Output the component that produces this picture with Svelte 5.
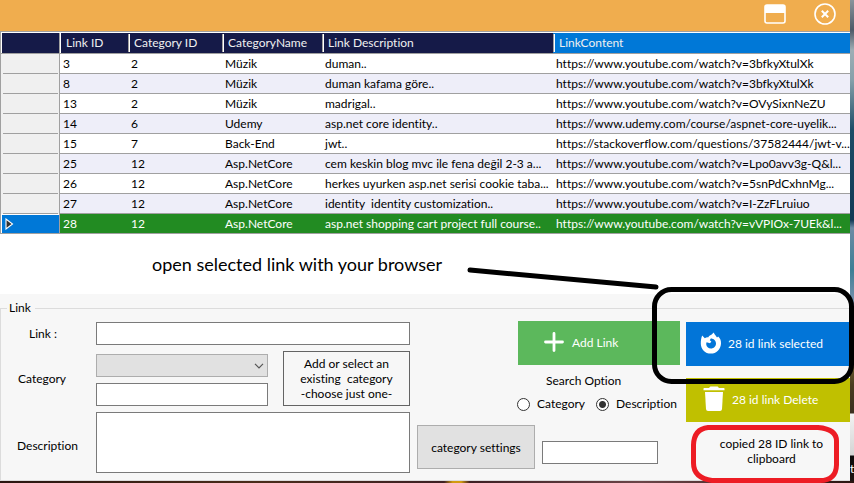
<script>
  const rows = [
    { id: 3, cat: 2, name: 'Müzik', desc: 'duman..', url: 'https://www.youtube.com/watch?v=3bfkyXtulXk' },
    { id: 8, cat: 2, name: 'Müzik', desc: 'duman kafama göre..', url: 'https://www.youtube.com/watch?v=3bfkyXtulXk' },
    { id: 13, cat: 2, name: 'Müzik', desc: 'madrigal..', url: 'https://www.youtube.com/watch?v=OVySixnNeZU' },
    { id: 14, cat: 6, name: 'Udemy', desc: 'asp.net core identity..', url: 'https://www.udemy.com/course/aspnet-core-uyelik...' },
    { id: 15, cat: 7, name: 'Back-End', desc: 'jwt..', url: 'https://stackoverflow.com/questions/37582444/jwt-v...' },
    { id: 25, cat: 12, name: 'Asp.NetCore', desc: 'cem keskin blog mvc ile fena değil 2-3 a...', url: 'https://www.youtube.com/watch?v=Lpo0avv3g-Q&l...' },
    { id: 26, cat: 12, name: 'Asp.NetCore', desc: 'herkes uyurken asp.net serisi cookie taba...', url: 'https://www.youtube.com/watch?v=5snPdCxhnMg...' },
    { id: 27, cat: 12, name: 'Asp.NetCore', desc: 'identity  identity customization..', url: 'https://www.youtube.com/watch?v=I-ZzFLruiuo' },
    { id: 28, cat: 12, name: 'Asp.NetCore', desc: 'asp.net shopping cart project full course..', url: 'https://www.youtube.com/watch?v=vVPIOx-7UEk&l...' }
  ];
  let selected = $state(28);
  let searchBy = $state('description');
</script>

<div class="desktop">
  <main class="window">
    <header class="titlebar">
      <button class="tool" aria-label="Maximize">
        <svg width="22" height="20" viewBox="0 0 22 20">
          <rect x="1" y="1" width="20" height="18" rx="2" fill="none" stroke="#fff" stroke-width="1.6" />
          <path d="M1 2.5Q1 1 2.5 1H19.5Q21 1 21 2.5V9H1Z" fill="#fff" />
        </svg>
      </button>
      <button class="tool" aria-label="Close">
        <svg width="22" height="22" viewBox="0 0 22 22" fill="none" stroke="#fff">
          <circle cx="11" cy="11" r="10" stroke-width="1.6" />
          <path d="M7.8 7.8L14.2 14.2M14.2 7.8L7.8 14.2" stroke-width="2" />
        </svg>
      </button>
    </header>

    <table>
      <colgroup>
        <col class="c-head" /><col class="c-id" /><col class="c-cat" /><col class="c-name" /><col class="c-desc" /><col />
      </colgroup>
      <thead>
        <tr>
          <td class="corner"></td>
          <th>Link ID</th>
          <th>Category ID</th>
          <th>CategoryName</th>
          <th>Link Description</th>
          <th class="current">LinkContent</th>
        </tr>
      </thead>
      <tbody>
        {#each rows as row (row.id)}
          <tr class:selected={row.id === selected} onclick={() => (selected = row.id)}>
            <td class="rowhead">
              <div>
                {#if row.id === selected}
                  <svg width="9" height="12" viewBox="0 0 9 12"><path d="M1 1V11L7.5 6Z" fill="#333" stroke="#fff" stroke-width="1.1" /></svg>
                {/if}
              </div>
            </td>
            <td>{row.id}</td>
            <td>{row.cat}</td>
            <td>{row.name}</td>
            <td>{row.desc}</td>
            <td>{row.url}</td>
          </tr>
        {/each}
      </tbody>
    </table>

    <p class="caption">open selected link with your browser</p>

    <section class="panel">
      <fieldset>
        <legend>Link</legend>
        <div class="fields">
          <label class="l-link" for="link">Link :</label>
          <input class="wide" id="link" type="text" />
          <label class="l-cat" for="category">Category</label>
          <div class="choices">
            <div class="select">
              <select id="category"><option></option></select>
              <svg width="10" height="6" viewBox="0 0 10 6"><path d="M1 .8L5 4.8L9 .8" fill="none" stroke="#555" stroke-width="1.2" /></svg>
            </div>
            <input type="text" aria-label="New category" />
          </div>
          <p class="hint">Add or select an<br />existing &nbsp;category<br />-choose just one-</p>
          <label class="l-desc" for="description">Description</label>
          <textarea class="wide" id="description"></textarea>
        </div>

        <div class="middle">
          <button class="action add">
            <svg width="20" height="20" viewBox="0 0 20 20"><path d="M10 1.5V18.5M1.5 10H18.5" stroke="#fff" stroke-width="2.8" stroke-linecap="round" /></svg>
            Add Link
          </button>
          <div class="options" role="radiogroup" aria-labelledby="opt">
            <span id="opt" class="opt-title">Search Option</span>
            <label><input type="radio" value="category" bind:group={searchBy} />Category</label>
            <label><input type="radio" value="description" bind:group={searchBy} />Description</label>
          </div>
          <div class="bottom">
            <button class="settings">category settings</button>
            <input type="text" aria-label="Search" />
          </div>
        </div>

        <div class="side">
          <button class="action open">
            <svg width="22" height="22" viewBox="0 0 22 22">
              <path d="M2.2 3.4L4.8 6.2C6 5.2 7.2 5 8.4 5.2C9 3.8 10 3.2 11 3L13.8 0.6C14.4 2.8 16 3.8 17 5.4L18.2 4.6C20.2 6.4 21.2 8.8 21 11.4C20.8 17.2 16.4 21.6 10.8 21.6C5.2 21.6 .8 17.2 .8 11.4C.8 8.4 1.2 5.8 2.2 3.4Z" fill="#fff" />
              <path d="M6.6 10.2L10 11.2L11.4 9.6L9.8 8.2L10.8 6.4C13.8 6.4 16 8.6 16 11.4C16 14.2 13.8 16.4 11 16.4C8.4 16.4 6.4 14.6 6.2 12.2Q6.2 11 6.6 10.2Z" fill="#0275d8" />
            </svg>
            {selected} id link selected
          </button>
          <button class="action delete">
            <svg width="22" height="26" viewBox="0 0 22 26" fill="#fff">
              <path d="M.5 2.6Q.5 2 1.2 2H6L7.4 .6H14.6L16 2H20.8Q21.5 2 21.5 2.6V4.2H.5Z" />
              <path d="M2 6H20L19 23Q18.8 25 17 25H5Q3.2 25 3 23Z" />
            </svg>
            {selected} id link Delete
          </button>
          <p class="status">copied {selected} ID link to<br />clipboard</p>
        </div>
      </fieldset>
    </section>
  </main>

  <span class="behind">t</span>

  <svg class="marks" width="400" height="483" viewBox="0 0 400 483" fill="none" aria-hidden="true">
    <path d="M16 270L202 287" stroke="#000" stroke-width="5" stroke-linecap="round" />
    <rect x="200.5" y="289.5" width="197" height="92" rx="17" stroke="#000" stroke-width="5" />
    <path d="M254 427.5H364Q382.5 429 382.5 441V465Q382 480.5 366 480.5H258Q239.5 478 239.5 463V445Q240 429 254 427.5Z" stroke="#ed1c24" stroke-width="5" />
  </svg>
</div>

<style>
  :global(body) { margin: 0; }
  .desktop {
    position: relative;
    box-sizing: border-box;
    min-height: 100vh;
    padding: 0 4px 2px 0;
    font: 12px/15px Lato, "Open Sans", sans-serif;
    font-variant-ligatures: none;
    color: #000;
    background:
      linear-gradient(90deg, #2a1510, #4a2c1a 30%, #3e2024 52%, #d29b10 53%, #d29b10 54%, #3e2024 55%, #6b4548 75%, #2a1510) left bottom / 100% 2px no-repeat,
      linear-gradient(#8a949c 0, #4d5a68 30px, #9eaeb5 50px, #86a0aa 80px, #1c4c66 130px, #123a55 220px, #6c8ba4 228px, #3d7f95 270px, #7590ac 300px, #5d6f80 325px, #8a7a3c 345px, #4a3c20 385px, #3a3020 413px, #f2f2f2 414px, #d4d4d4 455px, #0c0a0a 456px, #201512 483px);
  }
  .window { background: #fff; }
  button, input, select, textarea { font: inherit; margin: 0; border-radius: 0; box-sizing: border-box; }
  p { margin: 0; }

  .titlebar {
    display: flex;
    justify-content: flex-end;
    align-items: center;
    gap: 28px;
    height: 31px;
    box-sizing: border-box;
    padding: 0 14px 3px 0;
    background: #f0ad4e;
  }
  .tool { display: flex; padding: 0; border: 0; background: none; }

  table {
    width: 100%;
    table-layout: fixed;
    border-collapse: separate;
    border-spacing: 0;
    border-top: 1px solid #a0a0a0;
    border-left: 1px solid #a0a0a0;
    padding-top: 1px;
  }
  .c-head { width: 59px; }
  .c-id { width: 68px; }
  .c-cat { width: 94px; }
  .c-name { width: 100px; }
  .c-desc { width: 231px; }
  th, td {
    height: 19px;
    padding: 0 0 0 3px;
    border-bottom: 1px solid #a0a0a0;
    line-height: 18px;
    white-space: pre;
    overflow: hidden;
    text-align: left;
  }
  th {
    height: 20px;
    padding-left: 6px;
    font-weight: 400;
    color: #f0f0f0;
    background: linear-gradient(90deg, #a0a0a0 50%, #fff 50%) left center / 2px 18px no-repeat #151a48;
  }
  th.current { background-color: #0078d7; }
  td.corner { border-right: 1px solid #a0a0a0; background: #151a48; box-shadow: inset 1px 0 #fff; }
  .corner + th { background-image: linear-gradient(#fff, #fff); background-size: 1px 100%; }
  tbody tr:nth-child(even) { background: #eeeef9; }
  tbody tr.selected { background: #228b22; color: #fff; }
  td.rowhead { padding: 0; border-right: 1px solid #a0a0a0; border-bottom: 0; background: #f0f0f0; }
  .rowhead div {
    display: flex;
    align-items: center;
    height: 19px;
    margin: 0 1px 0 2px;
    border-bottom: 1px solid #a0a0a0;
  }
  .selected .rowhead { background: #0078d7; border-bottom: 1px solid #a0a0a0; box-shadow: inset 1px 1px #fff; }
  .selected .rowhead div { border: 0; margin-left: 4px; }

  .caption { padding: 20px 0 20px 152px; font-size: 18px; line-height: 20px; }

  .panel { background: #f7f7f7; padding-top: 6px; }
  fieldset {
    display: flex;
    min-width: 0;
    margin: 0;
    padding: 5px 0 7px;
    border: 1px solid #dcdcdc;
    border-right-width: 0;
  }
  legend { margin-left: 6px; padding: 0 4px 0 2px; line-height: 16px; }
  input[type="text"], textarea { display: block; width: 100%; min-width: 0; border: 1px solid #7a7a7a; background: #fff; padding: 2px 4px; height: 23px; }
  textarea { height: 61px; resize: none; }

  .fields {
    flex: 1;
    display: grid;
    grid-template-columns: 80px minmax(0, 1fr) 127px;
    column-gap: 15px;
    row-gap: 6px;
    padding-top: 1px;
    align-content: start;
    align-items: center;
  }
  .wide { grid-column: 2 / 4; }
  .l-link { padding-left: 28px; }
  .l-cat { padding-left: 17px; }
  .l-desc { padding: 6px 0 0 16px; }
  .choices { display: grid; gap: 6px; align-self: end; }
  .select { position: relative; }
  select { display: block; width: 100%; height: 23px; border: 1px solid #adadad; background: #e1e1e1; appearance: none; }
  .select svg { position: absolute; right: 4px; top: 9px; pointer-events: none; }
  .hint { height: 55px; box-sizing: border-box; padding-top: 4px; border: 1px solid #646464; text-align: center; }

  .middle { width: 263px; margin-left: 7px; display: flex; flex-direction: column; }
  .action { display: flex; align-items: center; height: 44px; padding: 0; border: 0; color: #fff; white-space: nowrap; }
  .add { width: 162px; align-self: flex-end; gap: 8px; padding: 0 0 2px 26px; background: #5cb85c; }
  .options {
    display: grid;
    grid-template-columns: 79px auto;
    row-gap: 7px;
    margin: 8px 0 13px 100px;
    line-height: 16px;
  }
  .opt-title { grid-column: 1 / 3; padding-left: 29px; }
  .options label { display: flex; align-items: center; gap: 7px; white-space: nowrap; }
  input[type="radio"] {
    appearance: none;
    width: 13px;
    height: 13px;
    border: 1px solid #333;
    border-radius: 50%;
    background: #fff;
  }
  input[type="radio"]:checked { background: radial-gradient(circle, #333 3px, #fff 4px); }
  .bottom { display: flex; align-items: flex-end; gap: 7px; }
  .settings { flex: none; width: 118px; height: 44px; padding: 0; border: 1px solid #adadad; background: #e1e1e1; color: #000; }
  .bottom input[type="text"] { width: 116px; margin-bottom: 5px; }

  .side { width: 164px; margin-left: 6px; padding-top: 1px; display: flex; flex-direction: column; gap: 12px; }
  .open { padding: 0 0 2px 14px; gap: 6px; background: #0275d8; }
  .delete { padding: 0 0 2px 17px; gap: 7px; background: #c0c000; }
  .status { padding: 2px 0 0 7px; text-align: center; }

  .behind { position: absolute; right: 0; bottom: 7px; width: 4px; color: #fff; }
  .marks { position: absolute; top: 0; right: 0; pointer-events: none; }
</style>
